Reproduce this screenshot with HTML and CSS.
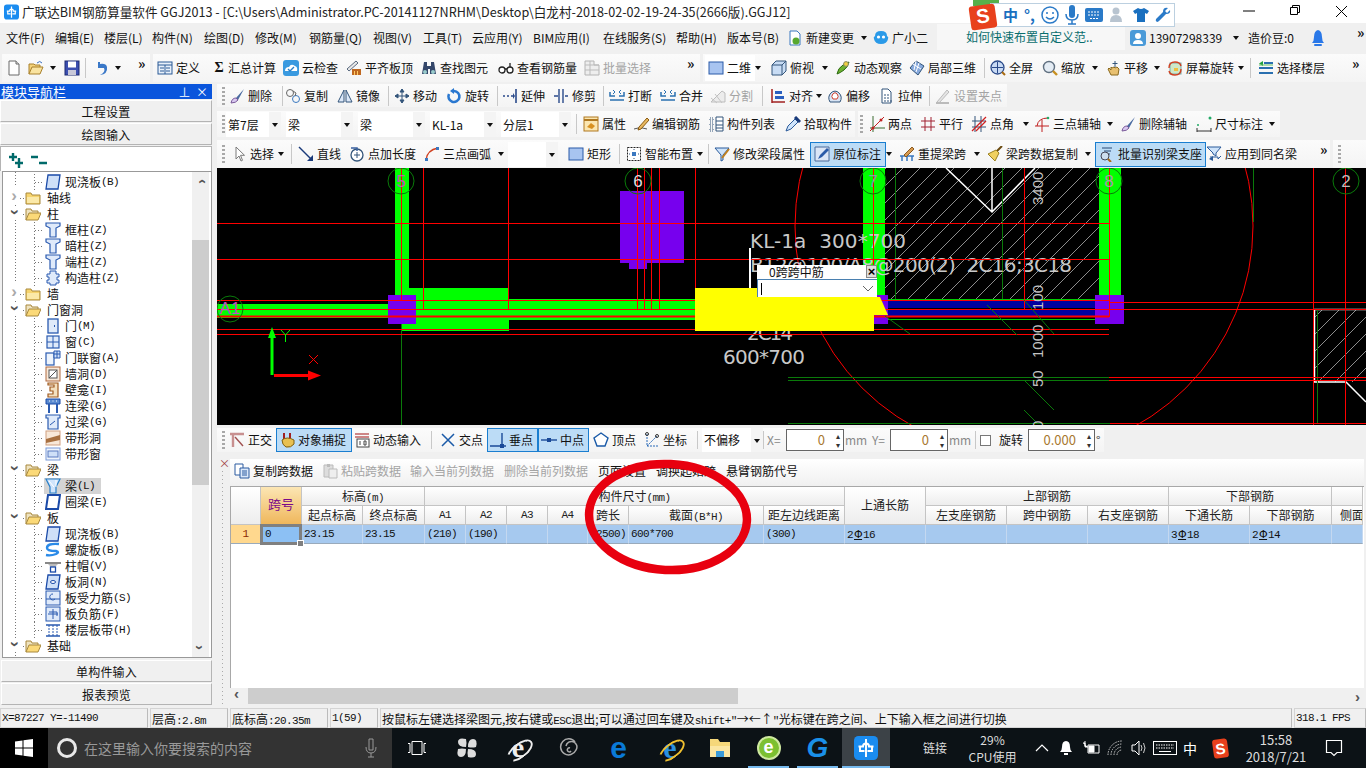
FILE: index.html
```html
<!DOCTYPE html>
<html lang="zh">
<head>
<meta charset="utf-8">
<title>广联达BIM钢筋算量软件 GGJ2013</title>
<link rel="stylesheet" href="styles.css">
</head>
<body>
<svg class="sprite" xmlns="http://www.w3.org/2000/svg">
<symbol id="app" viewBox="0 0 16 16"><rect width="16" height="16" rx="3" fill="#1a8cf0"/><path d="M8 2v12M3 7h3a2 2 0 0 1 4 0h3M4 7v3h3M12 7v3H9" fill="none" stroke="#fff" stroke-width="1.300"/></symbol>
<symbol id="new" viewBox="0 0 16 16"><path d="M3 1h7l3 3v11H3z" fill="#fff" stroke="#6a6a6a"/><path d="M10 1v3h3" fill="#ddd" stroke="#6a6a6a"/></symbol>
<symbol id="open" viewBox="0 0 16 16"><path d="M1 14V4h5l1 1h5v2" fill="#f4d27a" stroke="#a8802c"/><path d="M1 14l3-7h11l-3 7z" fill="#f9e3a0" stroke="#a8802c"/><path d="M9 3q3-3 5 0" fill="none" stroke="#3a70c0"/></symbol>
<symbol id="save" viewBox="0 0 16 16"><rect x="1" y="1" width="14" height="14" fill="#3c4fb0" stroke="#1c2a70"/><rect x="4" y="1.500" width="8" height="6" fill="#fff"/><rect x="4" y="10" width="8" height="5" fill="#c8c8d8"/></symbol>
<symbol id="undo" viewBox="0 0 16 16"><path d="M5 2v6h6q2 4-4 7 8-1 7-8-1-4-7-3V2z" fill="#3a78c8"/></symbol>
<symbol id="def" viewBox="0 0 16 16"><rect x="1" y="2" width="14" height="12" fill="#e8f0fa" stroke="#2a5a96"/><path d="M1 5h14M3 8h4M3 11h4M9 8h4M9 11h4M8 5v9" stroke="#2a5a96"/></symbol>
<symbol id="cloud" viewBox="0 0 16 16"><rect width="16" height="16" rx="3" fill="#3a9ae0"/><path d="M2 11q0-4 4-4 2-4 6-1 3 1 2 5z" fill="#fff"/><path d="M5 9l2 2 4-4" fill="none" stroke="#2a80c8" stroke-width="1.400"/></symbol>
<symbol id="flat" viewBox="0 0 16 16"><path d="M1 9l9-8 2 2-9 8z" fill="#e8e8e8" stroke="#5a6a80"/><rect x="6" y="9" width="9" height="6" fill="#c06820"/><path d="M8 11h1v4H8zM11 11h1v4h-1z" fill="#fc6"/></symbol>
<symbol id="find" viewBox="0 0 16 16"><path d="M3 2h3v4h4V2h3l2 12H9V9H7v5H1z" fill="#34476a"/><circle cx="4" cy="12" r="2" fill="#9cc"/><circle cx="12" cy="12" r="2" fill="#9cc"/></symbol>
<symbol id="glass" viewBox="0 0 16 16"><circle cx="4" cy="10" r="3" fill="#fff" stroke="#222" stroke-width="1.300"/><circle cx="12" cy="10" r="3" fill="#fff" stroke="#222" stroke-width="1.300"/><path d="M7 9h2M12 7V3" stroke="#222" stroke-width="1.300"/></symbol>
<symbol id="batch" viewBox="0 0 16 16"><path d="M1 1h9v4h5v10H1z" fill="#eee" stroke="#b4b4b4"/><path d="M1 5h14M1 10h14M6 1v14" stroke="#bbb"/></symbol>
<symbol id="rect" viewBox="0 0 16 16"><rect x="1" y="2" width="14" height="12" fill="#a8c4f0" stroke="#2a5aa8"/></symbol>
<symbol id="cube" viewBox="0 0 16 16"><path d="M1 5l4-4h10v10l-4 4H1z" fill="#c8dcf4" stroke="#33557a"/><path d="M1 5h10v10M11 5l4-4" fill="none" stroke="#33557a"/></symbol>
<symbol id="orbit" viewBox="0 0 16 16"><path d="M2 14q1-6 6-9 4-2 6-3-1 5-5 8-4 3-7 4z" fill="#6cb030" stroke="#2a6a10"/><circle cx="11" cy="4" r="2.400" fill="#f0d040" stroke="#886"/></symbol>
<symbol id="l3d" viewBox="0 0 16 16"><path d="M1 8l6-7 8 5-6 9z" fill="#88aadd" stroke="#33557a"/><path d="M4 4l8 5M7 1l-2 9M10 3l-3 9" stroke="#fff"/></symbol>
<symbol id="full" viewBox="0 0 16 16"><circle cx="7.500" cy="7.500" r="6.500" fill="#c8daf4" stroke="#2a4a8a" stroke-width="1.300"/><path d="M7.500 2v11M2 7.500h11" stroke="#2a4a8a"/><path d="M12 12l3 3" stroke="#a86a10" stroke-width="2"/></symbol>
<symbol id="zoom" viewBox="0 0 16 16"><circle cx="7" cy="7" r="5.500" fill="#e4ecf4" stroke="#607080" stroke-width="1.400"/><path d="M11 11l4 4" stroke="#c89020" stroke-width="2.400"/></symbol>
<symbol id="hand" viewBox="0 0 16 16"><path d="M3 9l3 6h7l1-6-2-2-2 1-1-1-2 1-1-1v3L4 8z" fill="#e8c070" stroke="#8a6a20"/><path d="M10 1v6M7.500 3.500h5" stroke="#33557a"/></symbol>
<symbol id="rot" viewBox="0 0 16 16"><rect x="3" y="3" width="11" height="11" fill="#cfe8c8" stroke="#7aa"/><path d="M2 8q0-6 6-6 5 0 6 4M14 9q0 6-6 6-5 0-6-4" fill="none" stroke="#d04020" stroke-width="1.400"/><path d="M7 8h4v3H7z" fill="#f0c040"/></symbol>
<symbol id="floor" viewBox="0 0 16 16"><path d="M6 2h9v2H6zM1 7h14v2H1zM1 12h14v2H1z" fill="#2a70b0"/><path d="M5 1v5L1 3.500z" fill="#20a040"/><path d="M1 5h14" stroke="#60c060"/></symbol>
<symbol id="brush" viewBox="0 0 16 16"><path d="M15 1L7 10l2 2z" fill="#4a6aa0"/><path d="M7 10q-4 0-5 5 5 0 7-3z" fill="#d8c8f0" stroke="#7a5a9a"/></symbol>
<symbol id="copy" viewBox="0 0 16 16"><circle cx="5" cy="5" r="3.500" fill="none" stroke="#666"/><circle cx="11" cy="11" r="3.500" fill="none" stroke="#3a78c0"/><path d="M8 3l3 2-1 3" fill="none" stroke="#666"/></symbol>
<symbol id="mirror" viewBox="0 0 16 16"><path d="M7 2v12H1zM9 2v12h6z" fill="#dce8f8" stroke="#33557a"/></symbol>
<symbol id="move" viewBox="0 0 16 16"><path d="M8 1v14M1 8h14M8 1L6 4h4zM8 15l-2-3h4zM1 8l3-2v4zM15 8l-3-2v4z" fill="#33557a" stroke="#33557a"/></symbol>
<symbol id="rotate" viewBox="0 0 16 16"><path d="M8 3a5.500 5.500 0 1 1-5 3" fill="none" stroke="#2a78d0" stroke-width="2.600"/><path d="M8 0v6L4 3z" fill="#2a78d0"/></symbol>
<symbol id="extend" viewBox="0 0 16 16"><path d="M1 8h2M5 8h2M9 8h2M14 1v14" stroke="#2a4a8a" stroke-width="1.600"/><path d="M11 5l2 3-2 3z" fill="#2a4a8a"/></symbol>
<symbol id="trim" viewBox="0 0 16 16"><path d="M6 1v14M10 1v14M1 8h4M12 8h3" stroke="#2a4a8a" stroke-width="1.400"/></symbol>
<symbol id="break" viewBox="0 0 16 16"><path d="M1 4v4h5M15 4v4h-5M1 12h14" fill="none" stroke="#2a70b0" stroke-width="1.500"/><path d="M4 2l2 2-2 2M12 2l-2 2 2 2" fill="none" stroke="#2a70b0"/></symbol>
<symbol id="split" viewBox="0 0 16 16"><path d="M1 14L12 3l3 2v9z" fill="#ececec" stroke="#bdbdbd"/><path d="M1 10l6 5M5 6l7 9" stroke="#c4c4c4"/></symbol>
<symbol id="align" viewBox="0 0 16 16"><path d="M2 1v14M15 14H2" stroke="#a02020" stroke-width="1.500"/><path d="M5 3h7v3H5zM5 8h9v3H5z" fill="#2a60c0"/></symbol>
<symbol id="offset" viewBox="0 0 16 16"><path d="M3 14a6 7 0 1 1 10 0z" fill="#d8e4f4" stroke="#33557a"/><path d="M6 11a3 3.500 0 1 1 4 0z" fill="#fff" stroke="#d04030"/></symbol>
<symbol id="stretch" viewBox="0 0 16 16"><path d="M3 1h6l3 3v11H3z" fill="#fff" stroke="#33557a"/><path d="M5 7h5M5 10h5M5 13h9" stroke="#33557a" stroke-dasharray="2 1"/></symbol>
<symbol id="gripset" viewBox="0 0 16 16"><path d="M2 14L12 2l2 2L4 15z" fill="#e4e4e4" stroke="#bbb"/><path d="M1 15h13" stroke="#bbb" stroke-width="2"/></symbol>
<symbol id="prop" viewBox="0 0 16 16"><rect x="1" y="1" width="14" height="14" fill="#fbe6b0" stroke="#b07820"/><path d="M1 4h14" stroke="#b07820" stroke-width="2"/><path d="M4 11l4-4 4 3-3 3z" fill="#d89020"/></symbol>
<symbol id="edit" viewBox="0 0 16 16"><path d="M1 13q6-3 13 0" fill="none" stroke="#555"/><path d="M6 11l8-9 2 2-8 9-3 1z" fill="#e8b860" stroke="#8a5a10"/></symbol>
<symbol id="list" viewBox="0 0 16 16"><path d="M2 2h3v3H2zM2 7h3v3H2zM2 12h3v3H2z" fill="none" stroke="#33557a" stroke-dasharray="1 1"/><path d="M8 1h7v14H8z" fill="#fff" stroke="#33557a"/><path d="M8 5h7M8 9h7M8 12h7" stroke="#33557a"/></symbol>
<symbol id="pick" viewBox="0 0 16 16"><path d="M1 15l2-5 7-7 3 3-7 7z" fill="#cfe4fb" stroke="#2a5a9a"/><path d="M10 1l5 5" stroke="#1a3a7a" stroke-width="3"/></symbol>
<symbol id="two" viewBox="0 0 16 16"><path d="M4 0v16M1 12h15" stroke="#3a6a30"/><path d="M1 15L15 1" stroke="#c02020"/><circle cx="4" cy="12" r="1.500" fill="#c02020"/><circle cx="12" cy="4" r="1.500" fill="#c02020"/></symbol>
<symbol id="para" viewBox="0 0 16 16"><path d="M1 5h14M1 11h14M5 1v14M11 1v14" stroke="#a02030"/></symbol>
<symbol id="angle" viewBox="0 0 16 16"><path d="M4 0v16M10 0v16M1 5h14M1 11h14" stroke="#33557a"/><path d="M1 15L15 1M5 15L15 5" stroke="#d02020" stroke-width="1.300"/></symbol>
<symbol id="arc3" viewBox="0 0 16 16"><path d="M1 10h14M8 4v12" stroke="#c02020"/><path d="M3 10Q4 2 14 2" fill="none" stroke="#c02020"/><circle cx="14" cy="2" r="1.300" fill="#2a6"/></symbol>
<symbol id="dim" viewBox="0 0 16 16"><path d="M1 15h14M1 12v4M15 12v4" stroke="#333"/><circle cx="2" cy="9" r="1" fill="#2a6"/><circle cx="14" cy="2" r="1.500" fill="#2a6"/></symbol>
<symbol id="sel" viewBox="0 0 16 16"><path d="M5 1v12l3-3 2 5 1.500-.7-2-5h4z" fill="#fff" stroke="#7a7a7a"/></symbol>
<symbol id="line" viewBox="0 0 16 16"><path d="M1 1l13 13" stroke="#1a3a7a" stroke-width="1.400"/><path d="M15 15V9l-6 6z" fill="#1a3a7a"/></symbol>
<symbol id="addlen" viewBox="0 0 16 16"><circle cx="8" cy="9" r="6" fill="#fff" stroke="#33557a" stroke-width="1.300"/><path d="M8 6v6M5 9h6" stroke="#33557a"/><path d="M2 2h6v3" fill="none" stroke="#3a60a0" stroke-width="1.500"/></symbol>
<symbol id="arc" viewBox="0 0 16 16"><path d="M2 14Q3 4 14 2" fill="none" stroke="#d04020" stroke-width="1.400"/><rect x="1" y="12" width="3" height="3" fill="#3a78c0"/><rect x="12" y="1" width="3" height="3" fill="#3a78c0"/></symbol>
<symbol id="smart" viewBox="0 0 16 16"><rect x="1.500" y="1.500" width="13" height="13" fill="#fff" stroke="#222" stroke-dasharray="2 1"/><path d="M8 3v10M3 8h10" stroke="#33557a" stroke-dasharray="1 2"/><rect x="6" y="6" width="4" height="4" fill="#3a78c0"/></symbol>
<symbol id="modify" viewBox="0 0 16 16"><path d="M1 2h14l-6 7v5l-2 1V9z" fill="#cfe4fb" stroke="#2a5a9a"/><path d="M8 12l7-9" stroke="#c08020" stroke-width="2"/></symbol>
<symbol id="situ" viewBox="0 0 16 16"><path d="M1 1h14v14H1z" fill="#dbe6f6" stroke="#4a6a9a"/><path d="M4 13l2-4 7-7 2 2-7 7z" fill="#2a5aa8"/></symbol>
<symbol id="relift" viewBox="0 0 16 16"><path d="M1 10h14M3 10v5M8 10v5M13 10v5" stroke="#3a78c0" stroke-width="1.500"/><path d="M5 9l8-8 2 2-8 8z" fill="#d89a50" stroke="#8a5a20"/></symbol>
<symbol id="broom" viewBox="0 0 16 16"><path d="M15 0L9 6" stroke="#6a4a10" stroke-width="2"/><path d="M9 4l3 3-4 8-7-7z" fill="#f0d060" stroke="#9a8020"/></symbol>
<symbol id="bid" viewBox="0 0 16 16"><path d="M3 2h10M5 5h7M5 8h6" stroke="#5a7aa0" stroke-width="1.600"/><circle cx="6" cy="10" r="4" fill="#cde" stroke="#445"/><path d="M9 13l3 3" stroke="#a86a10" stroke-width="2"/></symbol>
<symbol id="apply" viewBox="0 0 16 16"><path d="M1 1h14l-5 6v3L7 8V7z" fill="#cfe4fb" stroke="#2a5a9a"/><path d="M4 11h8v2l3-3" fill="none" stroke="#2a5a9a"/><path d="M7 15l-4-2 4-3z" fill="#2a5a9a"/></symbol>
<symbol id="ortho" viewBox="0 0 16 16"><path d="M1 2h14M4 2v13" stroke="#c89090" stroke-width="2.400"/><path d="M6 5l8 9" stroke="#a05050" stroke-width="1.400"/></symbol>
<symbol id="snap" viewBox="0 0 16 16"><path d="M5 1v6M11 1v6" stroke="#a02020" stroke-width="2"/><path d="M3 8q5-4 12 0v4q-3 4-8 3-4-2-4-7z" fill="#e8c050" stroke="#806010"/></symbol>
<symbol id="dyn" viewBox="0 0 16 16"><path d="M1 2h14M1 5h14" stroke="#c06060" stroke-width="1.400"/><rect x="3" y="7" width="12" height="8" fill="#fff" stroke="#444"/><path d="M6 9v4M10 9h2v4h-2z" stroke="#444" fill="none"/></symbol>
<symbol id="cross" viewBox="0 0 16 16"><path d="M2 2l12 12M14 2L2 14" stroke="#1a5aa8" stroke-width="1.500"/></symbol>
<symbol id="perp" viewBox="0 0 16 16"><path d="M0 14h16M12 1v13" stroke="#1a4a98" stroke-width="1.400"/><rect x="10" y="12" width="4" height="4" fill="#1a4a98"/></symbol>
<symbol id="mid" viewBox="0 0 16 16"><path d="M0 8h16" stroke="#1a4a98" stroke-width="1.400"/><rect x="6" y="6" width="4" height="4" fill="#1a4a98"/></symbol>
<symbol id="vertex" viewBox="0 0 16 16"><path d="M8 1l7 5-3 8H4L1 6z" fill="#fff" stroke="#1a5aa8" stroke-width="1.400"/></symbol>
<symbol id="coord" viewBox="0 0 16 16"><path d="M3 2v12h11M3 14L13 4" stroke="#2a6ab8" stroke-dasharray="2 1" fill="none"/><circle cx="13" cy="4" r="1.500" fill="none" stroke="#333"/><circle cx="3" cy="2" r="1.500" fill="none" stroke="#333"/></symbol>
<symbol id="tcopy" viewBox="0 0 16 16"><path d="M1 1h8v11H1z" fill="#fff" stroke="#2a5aa0"/><path d="M6 5h9v10H6z" fill="#dbe8fa" stroke="#2a5aa0"/><path d="M8 8h5M8 10h5M8 12h5" stroke="#2a5aa0"/></symbol>
<symbol id="tpaste" viewBox="0 0 16 16"><path d="M2 2h9v12H2z" fill="#ddd" stroke="#bbb"/><path d="M5 1h3v3H5z" fill="#bbb"/><path d="M7 6h8v9H7z" fill="#eee" stroke="#bbb"/></symbol>
<symbol id="bell" viewBox="0 0 16 16"><path d="M8 0q4 1 4 7 0 4 2 6H2q2-2 2-6 0-6 4-7z" fill="#2a78e8"/><rect x="4" y="14" width="8" height="2" rx="1" fill="#2a78e8"/></symbol>
<symbol id="acct" viewBox="0 0 16 16"><rect width="16" height="16" rx="3" fill="#4a9ad8"/><circle cx="8" cy="6" r="3" fill="#fff"/><path d="M3 14q0-4 5-4t5 4z" fill="#fff"/></symbol>
<symbol id="chg" viewBox="0 0 16 16"><path d="M3 1h7l3 3v11H3z" fill="#fff" stroke="#3a78c0"/><circle cx="9" cy="11" r="3.500" fill="#58a830"/></symbol>
<symbol id="xiao" viewBox="0 0 16 16"><path d="M2 6q0-5 6-5t6 5q2 1 1 3-1 5-7 5t-7-5q-1-2 1-3z" fill="#2a9ae8"/><circle cx="5.500" cy="7" r="1.600" fill="#fff"/><circle cx="10.500" cy="7" r="1.600" fill="#fff"/></symbol>
<symbol id="fc" viewBox="0 0 16 16"><path d="M1 14V3h5l1 2h8v9z" fill="#f6d46e" stroke="#a8883c"/><path d="M2 7h12v6H2z" fill="#fbe9a8"/></symbol>
<symbol id="fo" viewBox="0 0 16 16"><path d="M1 14V3h5l1 2h6v2" fill="#efe3c0" stroke="#a8883c"/><path d="M1 14l3-7h12l-3 7z" fill="#fbd978" stroke="#a8883c"/></symbol>
<symbol id="tslab" viewBox="0 0 16 16"><path d="M3 1h12l-2 14H1z" fill="#cfe0f8" stroke="#1a4aa8" stroke-width="1.300"/></symbol>
<symbol id="tcol" viewBox="0 0 16 16"><path d="M1 1h14v3l-4 2v9H5V6L1 4z" fill="#dfeafa" stroke="#2a5ab0" stroke-width="1.200"/></symbol>
<symbol id="tgz" viewBox="0 0 16 16"><path d="M5 1h6v3h3v3h-2v3h2v3h-3v2H5v-2H2v-3h2V7H2V4h3z" fill="#dfeafa" stroke="#2a5ab0"/></symbol>
<symbol id="tdoor" viewBox="0 0 16 16"><rect x="3" y="1" width="10" height="14" fill="#dfeafa" stroke="#2a5ab0" stroke-width="1.300"/><rect x="9" y="7" width="1" height="2" fill="#2a5ab0"/></symbol>
<symbol id="twin" viewBox="0 0 16 16"><rect x="2" y="2" width="12" height="12" fill="#dfeafa" stroke="#2a5ab0" stroke-width="1.200"/><path d="M8 2v12M2 8h12" stroke="#2a5ab0"/></symbol>
<symbol id="tdw" viewBox="0 0 16 16"><rect x="1" y="3" width="8" height="12" fill="#eef4fc" stroke="#2a5ab0" stroke-width="1.200"/><path d="M9 1h6v7H9z" fill="#cfe0f8" stroke="#2a5ab0"/><path d="M12 1v7M9 4h6" stroke="#2a5ab0"/></symbol>
<symbol id="thole" viewBox="0 0 16 16"><rect x="1" y="1" width="14" height="14" fill="#f8e8d8" stroke="#b06a40"/><rect x="4" y="4" width="8" height="8" fill="#fff" stroke="#555"/><path d="M4 12l8-8" stroke="#555"/></symbol>
<symbol id="tniche" viewBox="0 0 16 16"><path d="M3 1h10v14H3v-3h5V9H5V5h4V3H3z" fill="#f4e0c0" stroke="#a05a20" stroke-width="1.200"/></symbol>
<symbol id="tlink" viewBox="0 0 16 16"><path d="M1 1h14v5H1z" fill="#5a8ad0" stroke="#1a4aa8"/><path d="M4 6v9M12 6v9" stroke="#2a5ab0" stroke-width="2"/><path d="M4 3h1M7.500 3h1M11 3h1" stroke="#fff"/></symbol>
<symbol id="tover" viewBox="0 0 16 16"><path d="M1 1h14v3h-2v11H3V4H1z" fill="#dfeafa" stroke="#2a5ab0" stroke-width="1.200"/><path d="M5 11l5-4" stroke="#2a5ab0"/></symbol>
<symbol id="tband" viewBox="0 0 16 16"><rect x="1" y="1" width="14" height="14" fill="#f8e8d8" stroke="#d0a080"/><path d="M1 9L15 5v5L1 13z" fill="#a87040"/></symbol>
<symbol id="tbw" viewBox="0 0 16 16"><rect x="1" y="2" width="14" height="12" fill="#eef4fc" stroke="#7a9ad8"/><rect x="3" y="5" width="10" height="6" fill="#cfe0f8" stroke="#5a7ac0"/></symbol>
<symbol id="tbeam" viewBox="0 0 16 16"><path d="M1 1h14l-4 8v6H5V9z" fill="#cfe4fb" stroke="#2a80c8" stroke-width="1.200"/><path d="M4 3l5 6M11 2v7" stroke="#fff"/></symbol>
<symbol id="tring" viewBox="0 0 16 16"><path d="M3 1h12l-2 14H1z" fill="#fff" stroke="#1a4aa8" stroke-width="2"/></symbol>
<symbol id="tspir" viewBox="0 0 16 16"><path d="M14 2Q2 1 2 6q0 3 9 3 4 1 0 3-5 2-10 1" fill="none" stroke="#2a8ae8" stroke-width="2.400"/></symbol>
<symbol id="tcap" viewBox="0 0 16 16"><path d="M0 4h16v2H0z" fill="#888"/><path d="M3 6h10l-3 3H6z" fill="#bbb"/><rect x="5.500" y="9" width="5" height="5" fill="#fff" stroke="#1a4aa8" stroke-width="1.300"/></symbol>
<symbol id="tsh" viewBox="0 0 16 16"><path d="M3 1h12l-2 14H1z" fill="#cfe0f8" stroke="#1a4aa8" stroke-width="1.300"/><ellipse cx="8" cy="8" rx="2.500" ry="1.500" fill="#fff" stroke="#1a4aa8"/></symbol>
<symbol id="trb" viewBox="0 0 16 16"><rect x="1" y="1" width="14" height="14" fill="#dfeafa" stroke="#2a5ab0"/><path d="M1 9h14M8 4a3 3 0 1 0 2 5" fill="none" stroke="#2a5ab0"/></symbol>
<symbol id="tneg" viewBox="0 0 16 16"><rect x="1" y="1" width="14" height="14" fill="#dfeafa" stroke="#2a5ab0"/><path d="M3 8h10M4 6h8v4M8 3v10" fill="none" stroke="#2a5ab0"/></symbol>
<symbol id="tfb" viewBox="0 0 16 16"><path d="M1 3h14M1 14h14" stroke="#2a5ab0" stroke-width="1.400"/><path d="M4 3v11M8 3v11M12 3v11" stroke="#2a5ab0" stroke-dasharray="2 1"/></symbol>
<pattern id="hatch" width="17" height="17" patternUnits="userSpaceOnUse"><path d="M0 17L17 0" stroke="#c8c8c8" stroke-width=".7"/></pattern>
</svg>

<div class="app">
  <header class="title">
    <svg class="logo"><use href="#app"/></svg>
    <span>广联达BIM钢筋算量软件 GGJ2013 - [C:\Users\Administrator.PC-20141127NRHM\Desktop\白龙村-2018-02-02-19-24-35(2666版).GGJ12]</span>
    <div class="winctl">
      <svg width="24" height="14"><path d="M6 7h12" stroke="#000"/></svg>
      <svg width="24" height="14"><path d="M7.500 3.500h7v7h-7zM9.500 3.500v-2h7v7h-2" fill="none" stroke="#000"/></svg>
      <svg width="24" height="14"><path d="M7 2l11 11M18 2L7 13" stroke="#000"/></svg>
    </div>
  </header>

  <nav class="bar menu">
    <div>文件(F)</div><div>编辑(E)</div><div>楼层(L)</div><div>构件(N)</div><div>绘图(D)</div><div>修改(M)</div><div>钢筋量(Q)</div><div>视图(V)</div><div>工具(T)</div><div>云应用(Y)</div><div>BIM应用(I)</div><div>在线服务(S)</div><div>帮助(H)</div><div>版本号(B)</div>
    <div class="it"><svg class="ic"><use href="#chg"/></svg>新建变更</div><i class="dd"></i>
    <div class="it"><svg class="ic"><use href="#xiao"/></svg>广小二</div>
    <div class="tip">如何快速布置自定义范..</div>
    <div class="it acct"><svg class="ic"><use href="#acct"/></svg>13907298339</div><i class="dd"></i>
    <div>造价豆:0</div>
    <div class="it"><svg class="ic"><use href="#bell"/></svg></div>
    <div class="more">»</div>
  </nav>

  <div class="tb1">
    <div class="bar grp t1a">
      <svg class="ic"><use href="#new"/></svg><svg class="ic"><use href="#open"/></svg><i class="dd"></i><svg class="ic"><use href="#save"/></svg><b class="sep"></b><svg class="ic"><use href="#undo"/></svg><i class="dd"></i><div class="more">»</div>
    </div>
    <div class="bar grp t1b">
      <div class="it"><svg class="ic"><use href="#def"/></svg>定义</div>
      <div class="it"><span class="sigma">Σ</span>汇总计算</div>
      <div class="it"><svg class="ic"><use href="#cloud"/></svg>云检查</div>
      <div class="it"><svg class="ic"><use href="#flat"/></svg>平齐板顶</div>
      <div class="it"><svg class="ic"><use href="#find"/></svg>查找图元</div>
      <div class="it"><svg class="ic"><use href="#glass"/></svg>查看钢筋量</div>
      <div class="it off"><svg class="ic"><use href="#batch"/></svg>批量选择</div>
      <div class="more">»</div>
    </div>
    <div class="bar grp t1c">
      <div class="it wbox"><svg class="ic"><use href="#rect"/></svg>二维</div><i class="dd"></i>
      <div class="it"><svg class="ic"><use href="#cube"/></svg>俯视</div><i class="dd"></i>
      <div class="it"><svg class="ic"><use href="#orbit"/></svg>动态观察</div>
      <div class="it"><svg class="ic"><use href="#l3d"/></svg>局部三维</div>
      <b class="sep"></b>
      <div class="it"><svg class="ic"><use href="#full"/></svg>全屏</div>
      <div class="it"><svg class="ic"><use href="#zoom"/></svg>缩放</div><i class="dd"></i>
      <div class="it"><svg class="ic"><use href="#hand"/></svg>平移</div><i class="dd"></i>
      <div class="it"><svg class="ic"><use href="#rot"/></svg>屏幕旋转</div><i class="dd"></i>
      <b class="sep"></b>
      <div class="it"><svg class="ic"><use href="#floor"/></svg>选择楼层</div>
      <div class="more">»</div>
    </div>
  </div>

  <main class="main">
    <aside class="left">
      <div class="navhead"><span>模块导航栏</span><span class="navbtn">⊥&nbsp;&nbsp;×</span></div>
      <div class="lbtn">工程设置</div>
      <div class="lbtn">绘图输入</div>
      <div class="plusbar">
        <svg width="42" height="16"><path d="M6 1v8M2 5h8M12 6v10M8 11h8M24 5h7M32 11h8" stroke="#006a6a" stroke-width="2.400" fill="none"/></svg>
      </div>
      <div class="treebox">
        <div class="tree">
          <div class="r l1"><svg class="ic"><use href="#tslab"/></svg>现浇板<span class="m">(B)</span></div>
          <div class="r l0"><i class="cv">›</i><svg class="ic"><use href="#fc"/></svg>轴线</div>
          <div class="r l0"><i class="cv o">›</i><svg class="ic"><use href="#fo"/></svg>柱</div>
          <div class="r l1"><svg class="ic"><use href="#tcol"/></svg>框柱<span class="m">(Z)</span></div>
          <div class="r l1"><svg class="ic"><use href="#tcol"/></svg>暗柱<span class="m">(Z)</span></div>
          <div class="r l1"><svg class="ic"><use href="#tcol"/></svg>端柱<span class="m">(Z)</span></div>
          <div class="r l1"><svg class="ic"><use href="#tgz"/></svg>构造柱<span class="m">(Z)</span></div>
          <div class="r l0"><i class="cv">›</i><svg class="ic"><use href="#fc"/></svg>墙</div>
          <div class="r l0"><i class="cv o">›</i><svg class="ic"><use href="#fo"/></svg>门窗洞</div>
          <div class="r l1"><svg class="ic"><use href="#tdoor"/></svg>门<span class="m">(M)</span></div>
          <div class="r l1"><svg class="ic"><use href="#twin"/></svg>窗<span class="m">(C)</span></div>
          <div class="r l1"><svg class="ic"><use href="#tdw"/></svg>门联窗<span class="m">(A)</span></div>
          <div class="r l1"><svg class="ic"><use href="#thole"/></svg>墙洞<span class="m">(D)</span></div>
          <div class="r l1"><svg class="ic"><use href="#tniche"/></svg>壁龛<span class="m">(I)</span></div>
          <div class="r l1"><svg class="ic"><use href="#tlink"/></svg>连梁<span class="m">(G)</span></div>
          <div class="r l1"><svg class="ic"><use href="#tover"/></svg>过梁<span class="m">(G)</span></div>
          <div class="r l1"><svg class="ic"><use href="#tband"/></svg>带形洞</div>
          <div class="r l1"><svg class="ic"><use href="#tbw"/></svg>带形窗</div>
          <div class="r l0"><i class="cv o">›</i><svg class="ic"><use href="#fo"/></svg>梁</div>
          <div class="r l1 cur"><svg class="ic"><use href="#tbeam"/></svg>梁<span class="m">(L)</span></div>
          <div class="r l1"><svg class="ic"><use href="#tring"/></svg>圈梁<span class="m">(E)</span></div>
          <div class="r l0"><i class="cv o">›</i><svg class="ic"><use href="#fo"/></svg>板</div>
          <div class="r l1"><svg class="ic"><use href="#tslab"/></svg>现浇板<span class="m">(B)</span></div>
          <div class="r l1"><svg class="ic"><use href="#tspir"/></svg>螺旋板<span class="m">(B)</span></div>
          <div class="r l1"><svg class="ic"><use href="#tcap"/></svg>柱帽<span class="m">(V)</span></div>
          <div class="r l1"><svg class="ic"><use href="#tsh"/></svg>板洞<span class="m">(N)</span></div>
          <div class="r l1"><svg class="ic"><use href="#trb"/></svg>板受力筋<span class="m">(S)</span></div>
          <div class="r l1"><svg class="ic"><use href="#tneg"/></svg>板负筋<span class="m">(F)</span></div>
          <div class="r l1"><svg class="ic"><use href="#tfb"/></svg>楼层板带<span class="m">(H)</span></div>
          <div class="r l0"><i class="cv o">›</i><svg class="ic"><use href="#fo"/></svg>基础</div>
        </div>
        <div class="vscroll"><span class="arr up">›</span><div class="vthumb"></div><span class="arr dn">›</span></div>
      </div>
      <div class="lbtn low">单构件输入</div>
      <div class="lbtn low">报表预览</div>
    </aside>

    <section class="right">
      <div class="bar grp tb2">
        <i class="grip"></i>
        <div class="it"><svg class="ic"><use href="#brush"/></svg>删除</div><b class="sep"></b>
        <div class="it"><svg class="ic"><use href="#copy"/></svg>复制</div>
        <div class="it"><svg class="ic"><use href="#mirror"/></svg>镜像</div><b class="sep"></b>
        <div class="it"><svg class="ic"><use href="#move"/></svg>移动</div>
        <div class="it"><svg class="ic"><use href="#rotate"/></svg>旋转</div><b class="sep"></b>
        <div class="it"><svg class="ic"><use href="#extend"/></svg>延伸</div>
        <div class="it"><svg class="ic"><use href="#trim"/></svg>修剪</div><b class="sep"></b>
        <div class="it"><svg class="ic"><use href="#break"/></svg>打断</div>
        <div class="it"><svg class="ic"><use href="#break"/></svg>合并</div>
        <div class="it off"><svg class="ic"><use href="#split"/></svg>分割</div><b class="sep"></b>
        <div class="it"><svg class="ic"><use href="#align"/></svg>对齐<i class="dd in"></i></div>
        <div class="it"><svg class="ic"><use href="#offset"/></svg>偏移</div>
        <div class="it"><svg class="ic"><use href="#stretch"/></svg>拉伸</div><b class="sep"></b>
        <div class="it off"><svg class="ic"><use href="#gripset"/></svg>设置夹点</div>
      </div>

      <div class="tb3">
        <div class="bar grp t3a">
          <i class="grip"></i>
          <div class="combo">第7层<i class="dd"></i></div>
          <div class="combo">梁<i class="dd"></i></div>
          <div class="combo">梁<i class="dd"></i></div>
          <div class="combo">KL-1a<i class="dd"></i></div>
          <div class="combo">分层1<i class="dd"></i></div>
          <b class="sep"></b>
          <div class="it"><svg class="ic"><use href="#prop"/></svg>属性</div>
          <div class="it"><svg class="ic"><use href="#edit"/></svg>编辑钢筋</div>
          <div class="it"><svg class="ic"><use href="#list"/></svg>构件列表</div>
          <div class="it"><svg class="ic"><use href="#pick"/></svg>拾取构件</div>
        </div>
        <div class="bar grp t3b">
          <i class="grip"></i>
          <div class="it"><svg class="ic"><use href="#two"/></svg>两点</div>
          <div class="it"><svg class="ic"><use href="#para"/></svg>平行</div>
          <div class="it"><svg class="ic"><use href="#angle"/></svg>点角</div><i class="dd"></i>
          <div class="it"><svg class="ic"><use href="#arc3"/></svg>三点辅轴</div><i class="dd"></i>
          <div class="it"><svg class="ic"><use href="#brush"/></svg>删除辅轴</div>
          <div class="it"><svg class="ic"><use href="#dim"/></svg>尺寸标注</div><i class="dd"></i>
        </div>
      </div>

      <div class="tb4">
        <div class="bar grp t4a">
          <i class="grip"></i>
          <div class="it"><svg class="ic"><use href="#sel"/></svg>选择</div><i class="dd"></i><b class="sep"></b>
          <div class="it"><svg class="ic"><use href="#line"/></svg>直线</div>
          <div class="it"><svg class="ic"><use href="#addlen"/></svg>点加长度</div>
          <div class="it"><svg class="ic"><use href="#arc"/></svg>三点画弧</div><i class="dd"></i>
          <div class="combo slim"><i class="dd"></i></div>
          <div class="it"><svg class="ic"><use href="#rect"/></svg>矩形</div><b class="sep"></b>
          <div class="it"><svg class="ic"><use href="#smart"/></svg>智能布置</div><i class="dd"></i><b class="sep"></b>
          <div class="it"><svg class="ic"><use href="#modify"/></svg>修改梁段属性</div>
          <div class="it act"><svg class="ic"><use href="#situ"/></svg>原位标注</div><i class="dd"></i>
          <div class="it"><svg class="ic"><use href="#relift"/></svg>重提梁跨</div><i class="dd"></i>
          <div class="it"><svg class="ic"><use href="#broom"/></svg>梁跨数据复制</div><i class="dd"></i>
          <div class="it act"><svg class="ic"><use href="#bid"/></svg>批量识别梁支座</div>
          <div class="it"><svg class="ic"><use href="#apply"/></svg>应用到同名梁</div>
          <div class="more">»</div>
        </div>
        <div class="grp t4b"><i class="grip"></i></div>
      </div>

      <div class="canvas">
        <svg width="1149" height="257" viewBox="217 168 1149 257">
          <rect x="217" y="168" width="1149" height="257" fill="#000"/>
          <rect x="885" y="168" width="214" height="132" fill="url(#hatch)"/>
          <rect x="1314" y="309" width="52" height="73" fill="url(#hatch)"/>
          <path d="M946 168l46 44 43-44M992 168v44" fill="none" stroke="#fff" stroke-width="1.500"/>
          <path d="M1314.500 382V309.500H1366M1314 382h32l20 20" fill="none" stroke="#fff" stroke-width="1.500"/>
          <circle cx="1024" cy="226" r="229" fill="none" stroke="#f00"/>
          <g fill="#0f0">
            <rect x="395" y="168" width="14" height="132"/>
            <rect x="409" y="288" width="99" height="30"/>
            <rect x="401" y="320" width="108" height="11"/>
            <rect x="217" y="304" width="178" height="14"/>
            <rect x="395" y="299" width="300" height="21"/>
            <rect x="863" y="168" width="22" height="132"/>
            <rect x="1099" y="168" width="22" height="130"/>
          </g>
          <path d="M895.500 168v132M1002.500 168v132M1253.500 168v54M401.500 300v125M1317.500 309v114M788 377.500h321M788 380.500h321M788 423.500h322" stroke="#0a7a0a" fill="none"/>
          <path d="M885 299.500h214M885 319.500h214" stroke="#0c0"/>
          <g fill="#0000a0"><rect x="888" y="301" width="207" height="7"/><rect x="888" y="310" width="207" height="7"/></g>
          <g fill="#7700ee">
            <rect x="388" y="295" width="28" height="29"/>
            <rect x="620" y="191" width="64" height="72"/>
            <rect x="629" y="263" width="18" height="6"/>
            <rect x="874" y="295" width="14" height="29"/>
            <rect x="1095" y="295" width="29" height="29"/>
          </g>
          <g class="cad">
            <text x="750" y="248" textLength="156">KL-1a  300*700</text>
            <text x="750" y="272" textLength="322">B12@100/A8@200(2)  2C16;3C18</text>
            <text x="747" y="340" textLength="46">2C14</text>
            <text x="723" y="364" textLength="82">600*700</text>
          </g>
          <g stroke="#f00" fill="none">
            <path d="M217 223.500h892M217 259.500h892M217 300.500h892M217 309.500h1149M217 329.500h892M217 334.500h892M1109 302.500h257M1109 377.500h257M1109 380.500h257M1110 423.500h256"/>
            <path d="M401.500 168v132M423.500 168v141M508.500 168v141M637.500 168v141M644.500 168v141M651.500 168v141M659.500 168v141M695.500 168v120M873.500 168v149M1024.500 168v141M1109.500 168v149M1313.500 168v257M1345.500 168v257"/>
            <path d="M217 316.500h892" stroke-width="2"/>
          </g>
          <rect x="695" y="288" width="179" height="43" fill="#ff0"/>
          <path d="M874 297h6l8 18h-14z" fill="#ff0"/>
          <g stroke="#0a7a0a" fill="none">
            <path d="M987 305l30 30M1024 300l30 34M1024 380l30 30M1024 410l14 14M885 316l25 18"/>
            <circle cx="230" cy="309" r="13"/><circle cx="401" cy="181" r="13"/><circle cx="638" cy="181" r="13"/><circle cx="873" cy="181" r="13"/><circle cx="1109" cy="181" r="13"/><circle cx="1346" cy="181" r="13"/>
          </g>
          <g class="cad2">
            <text x="230" y="314" fill="#c050c0">A1</text><text x="401" y="187" fill="#c050c0">5</text><text x="638" y="187" fill="#ddd">6</text><text x="873" y="187" fill="#89a">7</text><text x="1109" y="187" fill="#a9a">8</text><text x="1346" y="187" fill="#bbb">2</text>
          </g>
          <g class="cad3">
            <text transform="translate(1043 205) rotate(-90)">3400</text>
            <text transform="translate(1043 310) rotate(-90)">100</text>
            <text transform="translate(1043 358) rotate(-90)">1000</text>
            <text transform="translate(1043 387) rotate(-90)">50</text>
            <text transform="translate(1043 429) rotate(-90)">0</text>
          </g>
          <path d="M272 375V333" stroke="#0f0" stroke-width="3"/>
          <path d="M272 327l-4 11h8z" fill="#0f0"/>
          <path d="M274 375.500h36" stroke="#f00" stroke-width="3"/>
          <path d="M321 375.500l-13-5v10z" fill="#f00"/>
          <path d="M281 330l4.500 5 4.500-5M285.500 335v7" stroke="#0f0" fill="none"/>
          <path d="M309 355l9 9M318 355l-9 9" stroke="#f00" fill="none"/>
        </svg>
      </div>

      <div class="snaprow">
        <div class="bar grp snap">
          <i class="grip"></i>
          <div class="it"><svg class="ic"><use href="#ortho"/></svg>正交</div>
          <div class="it act"><svg class="ic"><use href="#snap"/></svg>对象捕捉</div>
          <div class="it pl2"><svg class="ic"><use href="#dyn"/></svg>动态输入</div>
          <b class="sep"></b>
          <div class="it"><svg class="ic"><use href="#cross"/></svg>交点</div>
          <div class="it act"><svg class="ic"><use href="#perp"/></svg>垂点</div>
          <div class="it act"><svg class="ic"><use href="#mid"/></svg>中点</div>
          <div class="it pl4"><svg class="ic"><use href="#vertex"/></svg>顶点</div>
          <div class="it"><svg class="ic"><use href="#coord"/></svg>坐标</div>
          <b class="sep"></b>
          <div class="combo">不偏移<i class="dd"></i></div>
          <b class="sep"></b>
          <div class="lab">X=</div><div class="spin">0</div><div class="lab">mm</div>
          <div class="lab">Y=</div><div class="spin">0</div><div class="lab">mm</div>
          <b class="sep"></b>
          <div class="chk"></div>
          <div>旋转</div><div class="spin">0.000</div><div class="lab deg">°</div>
        </div>
      </div>

      <div class="lower">
        <div class="lgrip"><span class="lx">×</span></div>
        <div class="panel">
          <div class="bar ttool">
            <div class="it"><svg class="ic"><use href="#tcopy"/></svg>复制跨数据</div>
            <div class="it off"><svg class="ic"><use href="#tpaste"/></svg>粘贴跨数据</div>
            <div class="off">输入当前列数据</div>
            <div class="off">删除当前列数据</div>
            <div>页面设置</div>
            <div>调换起始跨</div>
            <div>悬臂钢筋代号</div>
          </div>
          <div class="tablebox">
            <div class="grid">
              <div class="h r2"></div><div class="h r2 kh">跨号</div><div class="h s2">标高<span class="m">(m)</span></div><div class="h s7">构件尺寸<span class="m">(mm)</span></div><div class="h r2">上通长筋</div><div class="h s3">上部钢筋</div><div class="h s2">下部钢筋</div><div class="h"></div>
              <div class="h">起点标高</div><div class="h">终点标高</div><div class="h m">A1</div><div class="h m">A2</div><div class="h m">A3</div><div class="h m">A4</div><div class="h">跨长</div><div class="h">截面<span class="m">(B*H)</span></div><div class="h">距左边线距离</div><div class="h">左支座钢筋</div><div class="h">跨中钢筋</div><div class="h">右支座钢筋</div><div class="h">下通长筋</div><div class="h">下部钢筋</div><div class="h clip">侧面</div>
              <div class="d rn">1</div><div class="d selc">0</div><div class="d">23.15</div><div class="d">23.15</div><div class="d">(210)</div><div class="d">(190)</div><div class="d"></div><div class="d"></div><div class="d">(2500)</div><div class="d">600*700</div><div class="d">(300)</div><div class="d">2<u>Φ</u>16</div><div class="d"></div><div class="d"></div><div class="d"></div><div class="d">3<u>Φ</u>18</div><div class="d">2<u>Φ</u>14</div><div class="d"></div>
            </div>
          </div>
          <div class="hscroll"><span class="arr lf">›</span><div class="hthumb"></div><span class="arr rt">›</span></div>
        </div>
      </div>
    </section>
  </main>

  <footer class="status">
    <div class="st s1 mono">X=87227 Y=-11490</div>
    <div class="st s2w">层高<span class="m">:2.8m</span></div>
    <div class="st s3w">底标高<span class="m">:20.35m</span></div>
    <div class="st s4w mono">1(59)</div>
    <div class="st s5w">按鼠标左键选择梁图元,按右键或<span class="m">ESC</span>退出;可以通过回车键及<span class="m">shift+"</span>→←↑<span class="m">"</span>光标键在跨之间、上下输入框之间进行切换</div>
    <div class="st s6w mono">318.1 FPS</div>
  </footer>

  <div class="taskbar">
    <div class="tk"><svg width="18" height="18"><path d="M0 2.500l7.500-1v7H0zM8.500 1.300L18 0v8.500H8.500zM0 9.500h7.500v7l-7.500-1zM8.500 9.500H18V18l-9.500-1.300z" fill="#fff"/></svg></div>
    <div class="search"><i class="cortana"></i><span>在这里输入你要搜索的内容</span><svg width="12" height="20"><path d="M4 1h4v11H4z" fill="none" stroke="#999"/><path d="M1 9q0 6 5 6t5-6M6 15v4M3 19h6" fill="none" stroke="#999"/></svg></div>
    <div class="tk"><svg width="20" height="16"><path d="M5 1.500h10v13H5zM1 3.500h2v9H1M19 3.500h-2v9h2" fill="none" stroke="#fff"/></svg></div>
    <div class="tk"><svg width="22" height="22"><path d="M10 10Q2 10 2 5T10 2q1 4 0 8zM12 10q0-8 5-8t3 8q-4 1-8 0zM12 12q8 0 8 5t-8 3q-1-4 0-8zM10 12q0 8-5 8t-3-8q4-1 8 0z" fill="#ddd"/></svg></div>
    <div class="tk ie w">e</div>
    <div class="tk"><svg width="20" height="20"><path d="M17 4A8 8 0 1 0 18 12 5.500 5.500 0 1 0 8 8M12 10a2 2 0 1 0 1 3" fill="none" stroke="#aaa" stroke-width="1.500"/></svg></div>
    <div class="tk ie edge">e</div>
    <div class="tk ie ie2">e</div>
    <div class="tk"><svg width="22" height="20"><path d="M1 19V1h8l2 3h10v15z" fill="#f5d77a"/><path d="M1 8h20v11H1z" fill="#fbe6a2"/><path d="M7 13h8v6H7z" fill="#3a9ad8"/></svg></div>
    <div class="tk ul"><span class="gcirc">e</span></div>
    <div class="tk ul blueg">G</div>
    <div class="tk ul on"><svg class="appbig"><use href="#app"/></svg></div>
    <div></div>
    <div class="tk tx">链接</div>
    <div class="tk tx two"><span>29%</span><span>CPU使用</span></div>
    <div class="tk"><svg width="14" height="10"><path d="M1 8l6-6 6 6" fill="none" stroke="#fff" stroke-width="1.200"/></svg></div>
    <div class="tk"><svg width="14" height="16"><path d="M7 1q4 0 4 6 0 3 2 5H1q2-2 2-5 0-6 4-6zM5 13h4v2H5z" fill="#fff"/></svg></div>
    <div class="tk"><svg width="18" height="16"><path d="M6 5h11v8H6z" fill="none" stroke="#fff"/><path d="M7 6h5v6H7zM3 1v5M1 3h2v4h3" stroke="#fff" fill="#fff"/></svg></div>
    <div class="tk"><svg width="16" height="16"><path d="M1 15a14 14 0 0 1 14-14M4 15a11 11 0 0 1 11-11M7 15a8 8 0 0 1 8-8M10 15a5 5 0 0 1 5-5" fill="none" stroke="#ccc" stroke-dasharray="1.500 1"/></svg></div>
    <div class="tk"><svg width="16" height="16"><path d="M1 5h3l4-4v14l-4-4H1z" fill="none" stroke="#fff"/><path d="M10 5q2 3 0 6M12.500 3q3 5 0 10" fill="none" stroke="#ccc"/></svg></div>
    <div class="tk"><svg width="24" height="14"><rect x=".5" y=".5" width="23" height="13" fill="none" stroke="#fff"/><path d="M3 4h18M3 7h18" stroke="#fff" stroke-dasharray="1.500 1"/><path d="M6 10.500h12" stroke="#fff"/></svg></div>
    <div class="tk tx big">中</div>
    <div class="tk"><span class="sogou small">S</span></div>
    <div class="tk tx two clock"><span>15:58</span><span>2018/7/21</span></div>
    <div class="tk"><svg width="18" height="18"><path d="M1.500 1.500h15v12H12l-3 3-3-3H1.500z" fill="none" stroke="#fff" stroke-width="1.200"/></svg></div>
    <div></div>
  </div>

  <div class="ime-stub"></div>
  <div class="ime">
    <span class="t zh">中</span><span class="t">°,</span>
    <svg width="18" height="18"><circle cx="9" cy="9" r="8" fill="none" stroke="#2a7ac8" stroke-width="1.500"/><path d="M6 6v2M12 6v2M5 11q4 4 8 0" fill="none" stroke="#2a7ac8" stroke-width="1.500"/></svg>
    <svg width="14" height="20"><rect x="4" y="0" width="6" height="13" rx="3" fill="#2a7ac8"/><path d="M1 9q0 6 6 6t6-6M7 15v4M3 19h8" fill="none" stroke="#2a7ac8" stroke-width="1.500"/></svg>
    <svg width="18" height="14"><rect width="18" height="14" rx="2" fill="#2a7ac8"/><path d="M3 4h12M3 7h12M5 10.500h8" stroke="#fff" stroke-dasharray="2 1"/></svg>
    <svg width="18" height="18"><circle cx="7" cy="5" r="3.500" fill="#b8c4d0"/><path d="M1 16q0-7 6-7t6 7z" fill="#b8c4d0"/></svg>
    <svg width="16" height="16"><path d="M5 1L0 4l2 3 2-1v9h8V6l2 1 2-3-5-3q-3 2-6 0z" fill="#1a70c0"/></svg>
    <svg width="16" height="16"><path d="M15 3l-3 3-2-2 3-3Q8 0 8 5L1 12q-1 2 1 3 1 0 2-1l7-7q5 0 4-4z" fill="#2a7ac8"/></svg>
  </div>
  <span class="sogou large">S</span>

  <div class="popup">
    <div class="ptitle"><span>0跨跨中筋</span><span class="pclose">×</span></div>
    <div class="pinput"><i class="caret"></i><svg width="12" height="8"><path d="M1 1l5 5 5-5" fill="none" stroke="#666"/></svg></div>
  </div>
  <i class="psliver"></i>

  <svg class="mark" width="170" height="118" viewBox="0 0 170 118"><ellipse cx="84" cy="59" rx="79" ry="53" fill="none" stroke="#e8000f" stroke-width="8.500" transform="rotate(3 84 59)"/></svg>
</div>
</body>
</html>
```
FILE: styles.css
```css
*{box-sizing:border-box}
html,body{margin:0;padding:0;height:100%}
body{width:1366px;height:768px;overflow:hidden;background:#f0f0f0;color:#111;font:12px/16px "Noto Sans CJK SC","Liberation Sans",sans-serif}
.sprite{position:absolute;width:0;height:0}
.app{position:relative;width:1366px;height:768px;display:flex;flex-direction:column;overflow:hidden}
i{font-style:normal}

.title{height:23px;background:#fff;display:flex;align-items:center;padding-left:4px;font-size:12.6px;white-space:nowrap;flex:none;position:relative;color:#222}
.logo{width:15px;height:16px;margin-right:3px;flex:none}
.winctl{position:absolute;right:13px;top:4px;display:flex;gap:22px}

.bar{display:grid;align-items:center;white-space:nowrap}
.ic{width:16px;height:16px;margin-right:3px;flex:none}
.it{display:flex;align-items:center}
.off{color:#a4a4a4}
.more{font-size:14px;line-height:12px;font-weight:700;align-self:start;margin-top:3px}
.dd{display:block;justify-self:start;width:0;height:0;border:3px solid transparent;border-top:4px solid #111;border-bottom:0}
.dd.in{display:inline-block;margin-left:3px}
.sep{display:block;width:1px;height:20px;background:#c8c8c8;justify-self:start}
.grip{display:block;width:3px;height:18px;background:repeating-linear-gradient(#a8a8a8 0 2px,transparent 2px 4px);justify-self:start;margin-left:2px}
.grp{background:linear-gradient(#fbfbfb,#f4f4f4)}
.sigma{width:18px;font:700 14px "Liberation Serif",serif;text-align:center;flex:none}

.menu{height:29px;flex:none;padding-left:6px;grid-template-columns:49px 49px 48px 52px 51px 54px 64px 50px 49px 61px 70px 73px 51px 60px 74px 12px 64px 188px 108px 15px 62px 47px auto}
.tip{background:#f7f7f7;height:26px;line-height:26px;padding-left:29px;color:#0a6e6e;margin-top:-1px}
.acct{padding-left:5px}

.tb1{height:32px;flex:none;display:flex;gap:3px;padding:2px 0 2px 2px}
.t1a{width:148px;padding-left:4px;grid-template-columns:22px 22px 14px 21px 8px 22px 23px 12px}
.t1b{width:547px;padding-left:4px;grid-template-columns:53px 73px 63px 75px 77px 86px 103px auto}
.t1c{flex:1;padding-left:2px;grid-template-columns:50px 16px 51px 13px 74px 75px 6px 52px 50px 13px 49px 13px 71px 12px 8px 94px auto}
.wbox{background:#fff;height:26px;padding-left:3px}

.main{flex:1;display:flex;min-height:0}
.left{width:213px;flex:none;display:flex;flex-direction:column;padding-right:1px}
.navhead{height:15px;background:#0a55dc;color:#fff;display:flex;justify-content:space-between;padding:0 4px 0 1px;font-size:13px;line-height:15px;flex:none;margin-bottom:1px}
.navbtn{font-size:12px}
.lbtn{height:22px;line-height:21px;text-align:center;background:#f0f0f0;border:1px solid #b4b4b4;border-left-color:#fff;border-top-color:#fff;margin:0 0 1px 0;flex:none;letter-spacing:.2px}
.plusbar{height:25px;background:#fff;border:1px solid #b4b4b4;border-bottom:0;padding:5px 0 0 6px;flex:none}
.plusbar svg{display:block}
.treebox{height:487px;flex:none;background:#fff;border:1px solid #999;margin-left:2px;margin-bottom:2px;position:relative;overflow:hidden;display:flex}
.tree{flex:1;padding-top:2px;overflow:hidden;background:repeating-linear-gradient(#777 0 1px,#fff 1px 3px) 12px 0/1px 100% no-repeat,#fff}
.r{height:16px;display:flex;align-items:center;position:relative;white-space:nowrap}
.l0{padding-left:22px}
.l0 .ic{margin-right:6px}
.l1{padding-left:42px}
.l1 .ic{margin-right:4px}
.l1::before{content:"";position:absolute;left:31px;top:0;bottom:0;width:1px;background:repeating-linear-gradient(#777 0 1px,transparent 1px 3px)}
.l1::after{content:"";position:absolute;left:32px;top:8px;width:9px;height:1px;background:repeating-linear-gradient(90deg,#777 0 1px,transparent 1px 3px)}
.l0::after{content:"";position:absolute;left:14px;top:8px;width:7px;height:1px;background:repeating-linear-gradient(90deg,#777 0 1px,transparent 1px 3px)}
.cv{position:absolute;left:5px;top:-3px;width:12px;height:18px;background:#fff;font:700 17px/18px "Liberation Sans",sans-serif;text-align:center;color:#aaa;z-index:1}
.cv.o{transform:rotate(90deg);color:#555;left:6px;top:-1px;height:14px;line-height:14px}
.cur{background:linear-gradient(#d4d4d4,#d4d4d4) 41px 0/57px 100% no-repeat}
.m,.mono{font-family:"Liberation Mono",monospace;font-size:11px;letter-spacing:-.6px}
.vscroll{width:17px;flex:none;background:#f0f0f0;position:relative;margin:0 2px 0 0;display:flex;flex-direction:column;align-items:center}
.vthumb{position:absolute;top:68px;left:0;right:0;height:245px;background:#cdcdcd}
.arr{font:700 15px/15px "Liberation Sans",sans-serif;color:#555;display:block}
.up{transform:rotate(-90deg);margin-top:2px}
.dn{transform:rotate(90deg);position:absolute;bottom:2px}
.low{margin-left:1px}

.right{flex:1;margin-left:4px;min-width:0;display:flex;flex-direction:column}
.tb2{height:23px;width:790px;padding-left:3px;margin-bottom:3px;flex:none;grid-template-columns:9px 53px 3px 52px 51px 6px 52px 51px 5px 51px 50px 6px 51px 50px 52px 8px 57px 52px 50px 6px auto}
.tb3{height:28px;flex:none;display:flex;gap:3px;padding:1px 0}
.t3a{width:638px;padding-left:3px;grid-template-columns:6px 60px 72px 72px 71px 75px 7px 50px 75px 77px auto}
.t3b{width:422px;grid-template-columns:11px 51px 51px 52px 11px 73px 13px 76px 73px 11px}
.combo{background:#fff;height:25px;line-height:25px;width:calc(100% - 5px);position:relative;padding-left:2px}
.combo::after{content:"";position:absolute;right:0;top:0;bottom:0;width:12px;background:#f4f4f4;z-index:0}
.combo .dd{position:absolute;right:3px;top:11px;z-index:1}
.slim{width:50px}
.tb4{height:30px;flex:none;display:flex;gap:3px;padding-top:2px}
.t4a{width:1113px;padding-left:3px;grid-template-columns:11px 47px 13px 7px 51px 75px 74px 10px 60px 51px 7px 71px 11px 6px 96px 76px 13px 75px 13px 98px 10px 111px 114px auto}
.t4b{flex:1;padding:5px 0 0 3px}
.act{background:#bcdcf6;border:1px solid #1a7ed0;height:25px;padding-left:3px}

.canvas{height:257px;flex:none;background:#000;overflow:hidden}
.canvas svg{display:block}
.cad text{font:20px "DejaVu Sans",sans-serif;fill:#c8c8c8;white-space:pre;stroke:none}
.cad2 text{font:17px "Liberation Sans",sans-serif;text-anchor:middle}
.cad3 text{font:15px "Liberation Sans",sans-serif;fill:#c4c4c4}

.snaprow{height:34px;flex:none;padding-top:3px}
.snap{height:24px;width:887px;padding-left:3px;grid-template-columns:9px 47px 76px 79px 9px 47px 51px 51px 55px 53px 5px 61px 4px 19px 59px 27px 18px 59px 26px 5px 19px 29px 68px auto}
.snap .act{height:24px;padding-left:2px}
.snap .combo{width:100%;height:24px;line-height:24px}
.snap .sep{height:18px}
.pl2{padding-left:2px}
.pl4{padding-left:4px}
.lab{color:#888}
.lab.deg{color:#333}
.spin{height:22px;border:1px solid #666;background:#fff;text-align:right;line-height:20px;padding-right:18px;color:#a87830;font-size:13px;position:relative;margin-right:1px}
.spin::after{content:"▴\A▾";white-space:pre;position:absolute;right:3px;top:1px;font-size:8px;line-height:9px;color:#333}
.chk{width:11px;height:11px;border:1px solid #777;background:#fff}

.lower{flex:1;display:flex;min-height:0}
.lgrip{width:13px;flex:none;background:repeating-linear-gradient(#aaa 0 1px,transparent 1px 4px) 5px 12px/1px 100% no-repeat;position:relative}
.lx{position:absolute;left:2px;top:-1px;font-size:11px;line-height:11px;color:#a04040}
.panel{width:1134px;flex:none;display:flex;flex-direction:column}
.ttool{height:27px;flex:none;padding:0 0 3px 4px;background:linear-gradient(#fff,#f0f0f0);grid-template-columns:88px 88px 94px 94px 58px 70px auto}
.tablebox{height:202px;flex:none;background:#fff;border:1px solid #a8a8a8;border-bottom:0;border-right:0;overflow:hidden}
.grid{display:grid;grid-template-columns:30px 41px 61px 62px 41px 41px 41px 40px 41px 135px 81px 81px 81px 81px 81px 81px 82px 31px;grid-template-rows:19px 19px 19px}
.h{background:linear-gradient(#fff,#ededed);border-right:1px solid #c4c4c4;border-bottom:1px solid #c4c4c4;text-align:center;line-height:18px;overflow:hidden;white-space:nowrap;color:#222}
.r2{grid-row:span 2;line-height:36px}
.s2{grid-column:span 2}
.s3{grid-column:span 3}
.s7{grid-column:span 7}
.kh{background:linear-gradient(#fce6b4,#efb75c);color:#7a0a8a;line-height:34px;font-size:13px}
.clip{text-align:left;padding-left:8px}
.d{background:#a6c9ef;border-right:1px solid #c4d8f0;border-bottom:1px solid #9ab;font:11px/19px "Liberation Mono",monospace;letter-spacing:-.6px;padding-left:2px;white-space:nowrap;overflow:visible;color:#111}
.rn{background:#ffd88e;text-align:center;color:#8a2a00;padding:0}
.selc{border:3px solid #808080;background:#8cc0f4;line-height:15px;position:relative;margin:-1px 0 -1px -1px;width:42px;height:21px;z-index:1}
.selc::after{content:"";position:absolute;right:-5px;bottom:-5px;width:5px;height:5px;background:#808080;border:1px solid #fff}
u{text-decoration:underline;font-family:"DejaVu Sans",sans-serif;margin:0 1px}
.hscroll{height:16px;flex:none;background:#f0f0f0;position:relative;display:flex;justify-content:space-between;align-items:center}
.hthumb{position:absolute;left:18px;top:0;bottom:0;width:490px;background:#cdcdcd}
.lf{transform:rotate(180deg);margin-left:4px}
.rt{margin-right:4px}

.status{height:21px;flex:none;display:flex;gap:2px;padding:1px 0 0}
.st{height:20px;line-height:19px;border:1px solid #d4d4d4;border-right-color:#bbb;background:#f0f0f0;white-space:nowrap;padding-left:1px;overflow:hidden}
.s1{width:148px}
.s2w{width:78px}
.s3w{width:98px}
.s4w{width:48px}
.s5w{width:912px}
.s6w{flex:1}

.taskbar{height:40px;flex:none;background:#0c1216;color:#fff;display:grid;align-items:center;grid-template-columns:48px 344px 49px 52px 50px 49px 53px 50px 49px 49px 49px 48px 25px 40px 75px 24px 24px 25px 24px 23px 30px 20px 40px 72px 43px 11px}
.tk{display:flex;align-items:center;justify-content:center;height:40px;position:relative}
.taskbar>.tk:first-child{background:#000}
.search{height:40px;background:#333;display:flex;align-items:center;color:#999;font-size:14px}
.cortana{width:20px;height:20px;border:3px solid #e8e8e8;border-radius:50%;margin:0 7px 0 9px;flex:none}
.search span{flex:1}
.search svg{margin-right:15px}
.ie{font:700 28px/40px "Liberation Serif",serif}
.w{color:#eee}
.edge{color:#0a7ad8;font-family:"Liberation Sans",sans-serif;font-size:30px}
.ie2{color:#2a90e0;font-size:30px}
.w::after,.ie2::after{content:"";position:absolute;left:50%;top:50%;width:26px;height:11px;margin:-5px 0 0 -13px;border:2px solid #eee;border-left-color:transparent;border-radius:50%;transform:rotate(-38deg)}
.ie2::after{border-color:#f0c030;border-left-color:transparent}
.ul::after{content:"";position:absolute;left:4px;right:4px;bottom:0;height:2px;background:#76b9ed}
.on{background:#3c4247}
.on::after{left:0;right:0}
.gcirc{width:24px;height:24px;border-radius:50%;background:#7cc030;border:2px solid #cfe8a0;color:#fff;font:700 18px/19px "Liberation Sans",sans-serif;text-align:center}
.blueg{color:#1a90e8;font:italic 700 28px/40px "Liberation Sans",sans-serif}
.appbig{width:24px;height:26px}
.tx{font-size:12px;color:#ddd}
.two{flex-direction:column;line-height:17px;color:#ddd}
.big{font-size:14px;color:#fff}
.clock{color:#ddd;font-size:13px}
.sogou{display:block;background:#e8401c;color:#fff;font:700 20px/22px "Liberation Sans",sans-serif;text-align:center;border-radius:3px;transform:rotate(-8deg)}
.sogou.small{width:15px;height:19px;font-size:15px;line-height:19px}
.sogou.large{position:absolute;left:970px;top:5px;width:26px;height:24px;z-index:4}

.ime-stub{position:absolute;left:973px;top:0;width:26px;height:6px;background:#56b04a;z-index:3}
.ime{position:absolute;left:990px;top:3px;width:185px;height:24px;background:#fff;border:1px solid #bcd0e0;display:flex;align-items:center;justify-content:space-between;padding:0 3px 0 12px;z-index:3}
.ime .t{font-size:15px;font-weight:700;color:#1a70c0}

.popup{position:absolute;left:757px;top:265px;width:120px;height:32px;z-index:2;background:#fff}
.ptitle{height:15px;display:flex;justify-content:space-between;font-size:12px;line-height:14px;padding-left:12px;border-bottom:1px solid #4a80b0}
.pclose{width:11px;height:13px;background:#ddd;border:1px solid #888;font:700 13px/11px "Liberation Sans",sans-serif;text-align:center;color:#000}
.pinput{height:17px;border-left:1px solid #4a80b0;display:flex;align-items:center;justify-content:space-between;padding:0 3px}
.caret{width:1px;height:12px;background:#000}
.psliver{position:absolute;left:749px;top:248px;width:2px;height:40px;background:#fff;z-index:2}
.mark{position:absolute;left:584px;top:458px;z-index:5}
```
